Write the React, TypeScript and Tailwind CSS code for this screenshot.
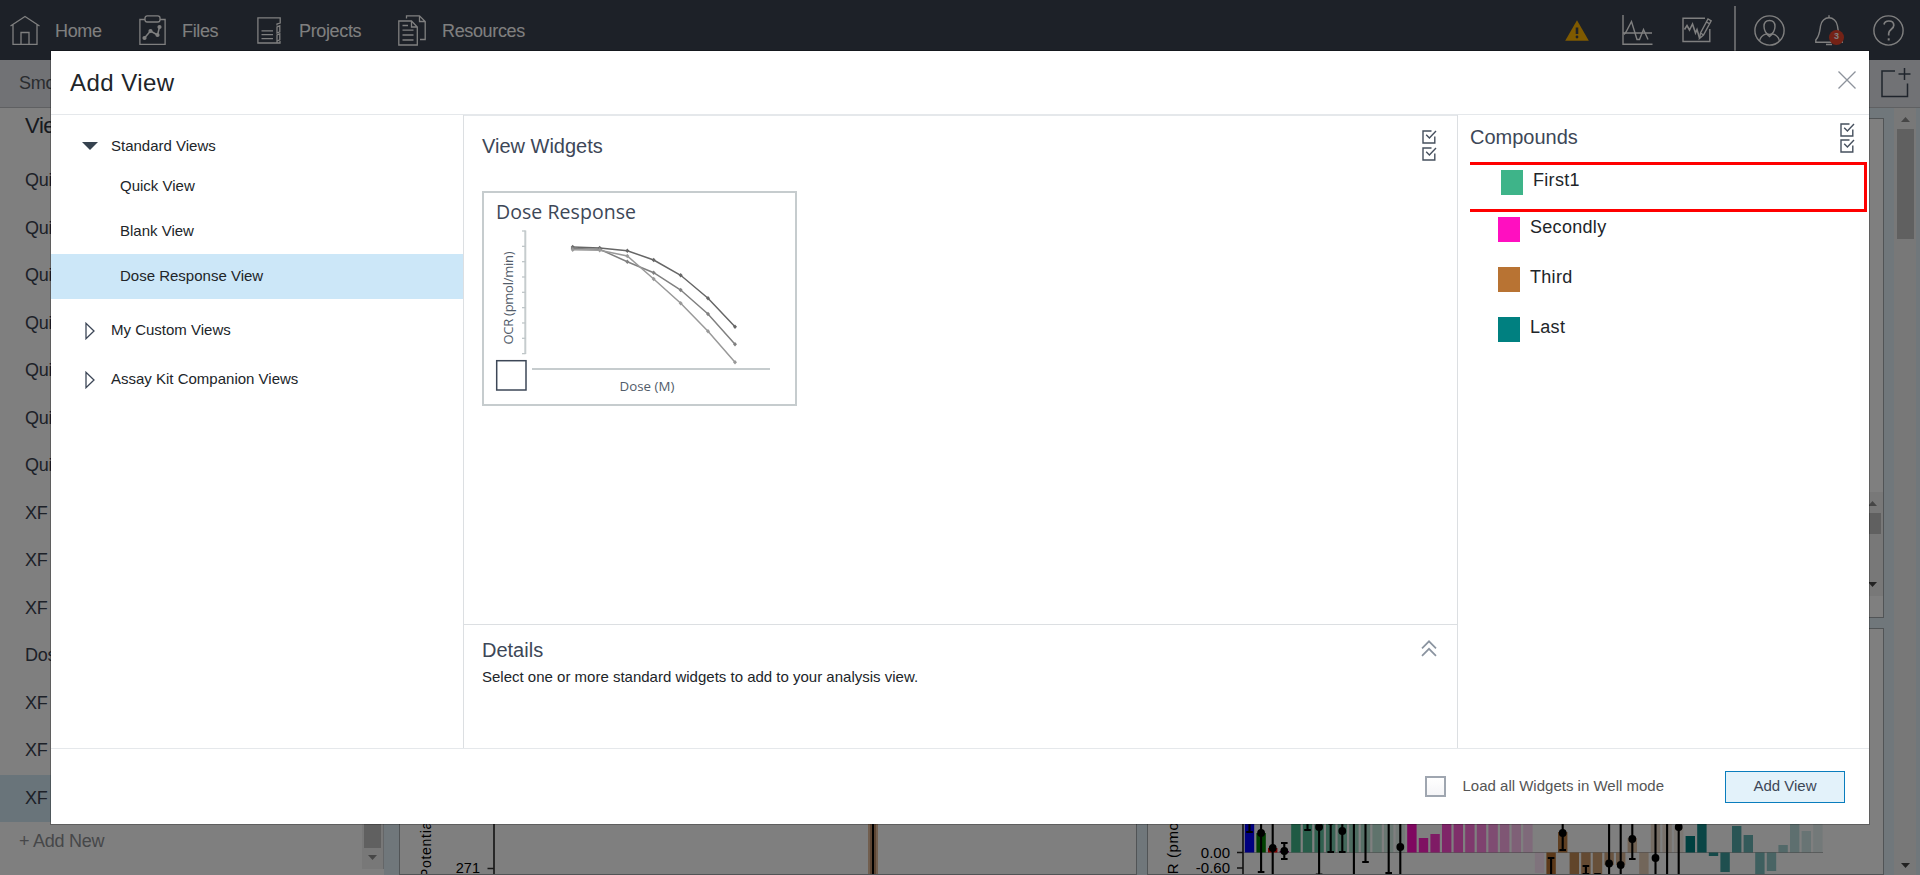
import React from "react";

const SANS = "font-['Liberation_Sans',Arial,sans-serif]";

/* ---------- icons ---------- */

const HomeIcon = () => (
  <svg width="30" height="30" viewBox="0 0 30 30" fill="none" stroke="currentColor" strokeWidth="1.3">
    <path d="M.5 11 15 1.5 29.5 11M3 9.5V29.3H27V9.5M11 29V17.5H19V29" />
  </svg>
);

const FilesIcon = () => (
  <svg width="27" height="30" viewBox="0 0 27 30" fill="none" stroke="currentColor" strokeWidth="1.3">
    <path d="M6 4.5H.9V29.3H26.1V4.5H21" />
    <rect x="6" y=".8" width="15" height="6.2" rx="2.2" />
    <path d="M5.500 23 11.500 16 18.500 20 20.500 12" strokeWidth="1.5" />
    <g fill="currentColor" stroke="none">
      <circle cx="5.500" cy="23" r="2.100" />
      <circle cx="11.500" cy="16" r="2.100" />
      <circle cx="18.500" cy="20" r="2.100" />
      <circle cx="20.500" cy="12" r="2.100" />
    </g>
  </svg>
);

const ProjectsIcon = () => (
  <svg width="24" height="27" viewBox="0 0 24 27" fill="none" stroke="currentColor" strokeWidth="1.3">
    <path d="M20 8.500V7L23.200 6V.9H.9V26H20V24.500M20 10v6l2.800-1.200V8.800zM20 18v6l2.800-1.200V16.800zM20 24.500v1.500h3v-2" />
    <path d="M4.500 13.800H16M4.500 17.700H16M4.500 21.600H16" />
  </svg>
);

const ResourcesIcon = () => (
  <svg width="28" height="31" viewBox="0 0 28 31" fill="none" stroke="currentColor" strokeWidth="1.3">
    <path d="M.8 6H13.500L19.300 12V30H.8zM13.500 6v6h5.800" />
    <path d="M8.500 3.500V.9H21.500L27.200 6.500V24.500H22M21.500 .9V6.500H27" />
    <path d="M4.500 10.500H10M4.500 15.200H15.500M4.500 20H15.500M4.500 25H15.500" />
  </svg>
);

const WarningIcon = () => (
  <svg width="24" height="21" viewBox="0 0 24 21">
    <path d="M12 .3 23.800 20.700H.2z" fill="#ffb400" />
    <path d="M12 7.500V14" stroke="#3a4250" strokeWidth="2.600" />
    <circle cx="12" cy="17" r="1.400" fill="#3a4250" />
  </svg>
);

const WaveIcon = () => (
  <svg width="31" height="31" viewBox="0 0 31 31" fill="none" stroke="currentColor" strokeWidth="1.400">
    <path d="M1 0V29.300H30.500M1 18H30" />
    <path d="M2 19.500 4 17 9.500 6.500 15 24.500H17.500L21.500 14.500 26 24.500" />
  </svg>
);

const EditChartIcon = () => (
  <svg width="30" height="26" viewBox="0 0 30 26" fill="none" stroke="currentColor" strokeWidth="1.400">
    <path d="M23 1.300H1V24.500H27.800V12" />
    <path d="M2.500 12.500 5 8.500 7.500 13 10.500 7 13.500 16 15 12.500 17.500 21" strokeWidth="1.600" />
    <path d="M17.500 21.500 18.500 16 26 2 29.200 3.800 21.500 18zM24.500 5 27.800 6.800M18.500 16 21.500 18" />
  </svg>
);

const UserIcon = () => (
  <svg width="31" height="31" viewBox="0 0 31 31" fill="none" stroke="currentColor" strokeWidth="1.400">
    <circle cx="15.500" cy="15.500" r="14.600" />
    <path d="M15.500 5.500c-3.500 0-5.500 2.500-5.500 6s2 8 5.500 8 5.500-4.500 5.500-8-2-6-5.500-6z" />
    <path d="M5.500 26C6.200 21.500 8.500 20 12.300 18.800L15.500 21.500 18.700 18.800C22.500 20 24.800 21.500 25.500 26" />
  </svg>
);

const BellIcon = () => (
  <svg width="28" height="31" viewBox="0 0 28 31" fill="none" stroke="currentColor" strokeWidth="1.400">
    <path d="M14 .3V3M11 29.500H17" />
    <path d="M.8 27.300H27.200V25C23.500 21 23.300 17 22.500 11 21.800 6 18 2.800 14 2.800S6.200 6 5.500 11C4.700 17 4.500 21 .8 25z" />
  </svg>
);

const HelpIcon = () => (
  <svg width="31" height="31" viewBox="0 0 31 31" fill="none" stroke="currentColor" strokeWidth="1.400">
    <circle cx="15.500" cy="15.500" r="14.600" />
    <path d="M11 9.500C11.500 7 13.200 6 15.800 6c3 0 5 1.600 5 4.300 0 4-5.100 4-5.100 8.300V20.500" strokeWidth="1.700" />
    <path d="M15.700 23.300v2.200" strokeWidth="2" />
  </svg>
);

const NewTabIcon = () => (
  <svg width="30" height="30" viewBox="0 0 30 30" fill="none" stroke="#3f4958" strokeWidth="1.500">
    <path d="M14 3H1V28.500H26.500V15.500" />
    <path d="M23.500 0V12M17.500 6H29.500" />
  </svg>
);

const CheckAll = ({ gap }: { gap: number }) => (
  <div className="flex flex-col" style={{ gap }}>
    {[0, 1].map((i) => (
      <svg key={i} width="15" height="14" viewBox="0 0 15 14" fill="none" stroke="#46505e">
        <path d="M9.500 1H1V13H12.800V6.500" strokeWidth="1.400" />
        <path d="M4.200 4.800 7.400 8 14 1" strokeWidth="1.400" />
      </svg>
    ))}
  </div>
);

const ArrowUp = ({ color }: { color: string }) => (
  <svg width="9" height="5" viewBox="0 0 9 5">
    <path d="M0 5 4.500 0 9 5z" fill={color} />
  </svg>
);

const ArrowDown = ({ color }: { color: string }) => (
  <svg width="9" height="5" viewBox="0 0 9 5">
    <path d="M0 0H9L4.500 5z" fill={color} />
  </svg>
);

/* ---------- page behind the dialog ---------- */

const viewRows = ["Quick View", "Quick View", "Quick View", "Quick View", "Quick View", "Quick View", "Quick View", "XF View", "XF View", "XF View", "Dose Response", "XF View", "XF View", "XF View"];

const ZERO = 34.5;
type Bar = { i: number; y: number; c: string; o: number };
const bar = (i: number, y: number, c: string, o: number): Bar => ({ i, y, c, o });
const GREEN = "#3eb489";
const PINK = "#ff0fc0";
const BROWN = "#b87333";
const TEAL = "#008080";
const group = (start: number, c: string, ys: number[], step: number) =>
  ys.map((y, k) => bar(start + k, y - 818, c, 1 - k * step));

const bars: Bar[] = [
  bar(0, 0, "#0000ff", 1),
  bar(1, 15, "#008000", 1),
  bar(2, 30, "#ff0000", 1),
  bar(3, 33, "#800080", 1),
  ...group(4, GREEN, [818, 818, 818, 818, 818, 818, 818, 818, 818, 818], 0.096),
  ...group(14, PINK, [818, 838, 834, 818, 818, 818, 818, 818, 818, 818, 818, 873], 0.082),
  ...group(26, BROWN, [880, 832, 880, 880, 880, 865, 865, 838, 880, 818, 818, 828], 0.08),
  ...group(38, TEAL, [836, 818, 856, 872, 826, 835, 874, 871, 845, 818, 831, 818], 0.082),
];

type Err = { i: number; a?: number; b?: number; d?: number };
const errs: Err[] = [
  { i: 0, b: 832 },
  { i: 1, b: 872, d: 833 },
  { i: 2, d: 848 },
  { i: 3, a: 843, b: 859, d: 851 },
  { i: 5, b: 830 },
  { i: 6, b: 874.5, d: 827 },
  { i: 7, b: 852, d: 821 },
  { i: 8, b: 852, d: 831 },
  { i: 9 },
  { i: 10, b: 862 },
  { i: 12, b: 873 },
  { i: 13, d: 847 },
  { i: 26, a: 858 },
  { i: 27, b: 850, d: 833 },
  { i: 29, a: 866, b: 874 },
  { i: 30, a: 874 },
  { i: 31, d: 863.5 },
  { i: 32, d: 865 },
  { i: 33, b: 859, d: 839 },
  { i: 35, d: 858 },
  { i: 36 },
  { i: 37, d: 827 },
];

const cx = (i: number) => 101.5 + 11.6 * i;

/* Lower strip of the OCR bar chart; its origin is the card's left edge. */
const BarChart = () => (
  <svg width="735" height="56" viewBox="0 0 735 56" className={SANS}>
    <path d={`M96 ${ZERO}H675`} stroke="#bbb" strokeWidth="1" />
    {bars.map((b) => (
      <rect key={b.i} x={cx(b.i) - 4.7} y={Math.min(b.y, ZERO)} width="9.400" height={Math.abs(ZERO - b.y)} fill={b.c} fillOpacity={b.o} />
    ))}
    <path d="M95 0V56M89 34.500H95M89 50H95" stroke="#222" strokeWidth="1.600" />
    {errs.map((e) => {
      const a = e.a === undefined ? 0 : e.a - 818;
      const b = e.b === undefined ? 58 : e.b - 818;
      return (
        <g key={e.i}>
          <path d={`M${cx(e.i)} ${a}V${b}M${cx(e.i) - 3.3} ${a}h6.600M${cx(e.i) - 3.3} ${b}h6.600`} stroke="#000" strokeWidth="2.100" />
          {e.d !== undefined && <circle cx={cx(e.i)} cy={e.d - 818} r="3.900" />}
        </g>
      );
    })}
    <text x="82" y="39.500" fontSize="15" textAnchor="end">0.00</text>
    <text x="82" y="55" fontSize="15" textAnchor="end">-0.60</text>
    <text transform="translate(30 80) rotate(-90)" fontSize="15" letterSpacing=".6">OCR (pmol/min)</text>
  </svg>
);

const PotentialChart = () => (
  <svg width="735" height="56" viewBox="0 0 735 56" className={SANS}>
    <rect x="468" y="0" width="10" height="56" fill="#d9a77c" fillOpacity=".75" />
    <rect x="470" y="0" width="6" height="56" fill="#b88a66" />
    <path d="M473 0V56" stroke="#000" strokeWidth="2" />
    <path d="M94 0V56M87.500 50.500H94" stroke="#333" strokeWidth="1.700" />
    <text x="80" y="55" fontSize="14.500" textAnchor="end">271</text>
    <text transform="translate(30.500 60) rotate(-90)" fontSize="14" letterSpacing=".7">Potential</text>
  </svg>
);

const NavItem = ({ icon, label, className }: { icon: React.ReactNode; label: string; className: string }) => (
  <div className={`flex items-center ${className}`}>
    {icon}
    <span className="pt-px text-[18px] leading-6 tracking-[-0.35px]">{label}</span>
  </div>
);

const Backdrop = () => (
  <div className="flex h-[875px] w-[1920px] flex-col overflow-hidden bg-white">
    <header className="flex h-[60px] shrink-0 items-center justify-between bg-[#3a4250] pl-[10px] pr-[16px] text-white">
      <nav className="flex items-center">
        <NavItem icon={<HomeIcon />} label="Home" className="w-[128.500px] gap-[15px]" />
        <NavItem icon={<FilesIcon />} label="Files" className="w-[118.500px] gap-[16.500px]" />
        <NavItem icon={<ProjectsIcon />} label="Projects" className="w-[141px] gap-[18px]" />
        <NavItem icon={<ResourcesIcon />} label="Resources" className="gap-[16px]" />
      </nav>
      <div className="flex items-center">
        <div className="mr-[33px]"><WarningIcon /></div>
        <div className="mr-[29px]"><WaveIcon /></div>
        <div className="mr-[22px]"><EditChartIcon /></div>
        <div className="mr-[18px] mt-[6px] h-[54px] w-[2px] bg-[#c4c7cc]" />
        <div className="mr-[30px]"><UserIcon /></div>
        <div className="relative mr-[30px]">
          <BellIcon />
          <span className="absolute left-[14px] top-[15px] flex size-[15px] items-center justify-center rounded-full bg-[#e8452c] text-[9px] font-bold">3</span>
        </div>
        <HelpIcon />
      </div>
    </header>
    <div className="flex h-12 shrink-0 items-center justify-between border-b border-[#bfc1c4] bg-[#e2e5ea] pl-[19px] pr-[9px] text-[18px] tracking-[-0.3px] text-[#55595f]">
      <span>Smo</span>
      <div className="mb-[2px]"><NewTabIcon /></div>
    </div>
    <div className="flex min-h-0 flex-1">
      <aside className="flex w-[384px] shrink-0 bg-white text-[#3a4250]">
        <div className="flex w-[362px] flex-col">
          <h2 className="h-[49px] pl-[25px] text-[22px] leading-[36px] tracking-[-0.4px] text-[#2f3540]">Views</h2>
          {viewRows.map((r, i) => (
            <div key={i} className={`h-[47.5px] shrink-0 pl-[25px] text-[18px] leading-[46px] tracking-[-0.3px] ${i === 13 ? "bg-[#d2e8f5]" : ""}`}>{r}</div>
          ))}
          <div className="pl-[19px] text-[18px] leading-[38px] tracking-[-0.25px] text-[#8d8f93]">+ Add New</div>
        </div>
        <div className="flex h-[761px] w-[22px] flex-col items-center justify-end border-r border-[#c8ccd0] bg-[#f1f1f1] pb-[9px]">
          <div className="mb-[7px] h-[600px] w-[17px] bg-[#c1c1c1]" />
          <ArrowDown color="#8c8c8c" />
        </div>
      </aside>
      <main className="flex flex-1 bg-[#e1eef7]">
        <div className="flex w-[1500px] flex-col gap-[10px] pl-[15px] pt-[10px]">
          <section className="flex h-[500px] shrink-0 items-end justify-end border border-[#a3a8ad] bg-white pb-[21px]">
            <div className="flex h-[104px] w-[22px] flex-col items-center bg-[#f1f1f1] pt-[9px]">
              <ArrowUp color="#8c8c8c" />
              <div className="mt-[7px] h-[21px] w-[17px] bg-[#c1c1c1]" />
              <div className="mt-[48px]"><ArrowDown color="#444" /></div>
            </div>
          </section>
          <div className="flex min-h-0 flex-1 justify-between">
            <section className="flex w-[738px] items-end border border-[#a3a8ad] bg-white"><PotentialChart /></section>
            <section className="flex w-[737px] items-end border border-[#a3a8ad] bg-white"><BarChart /></section>
          </div>
        </div>
        <div className="ml-[10px] flex w-[22px] flex-col items-center justify-between bg-[#f1f1f1] pb-[7px] pt-[9px]">
          <div className="flex flex-col items-center gap-[7px]">
            <ArrowUp color="#8c8c8c" />
            <div className="h-[110px] w-[17px] bg-[#c1c1c1]" />
          </div>
          <ArrowDown color="#444" />
        </div>
      </main>
    </div>
  </div>
);

/* ---------- dialog ---------- */

const curves = [
  { c: "#666", p: [[572.7, 247], [599.7, 248], [627.3, 250.7], [653.7, 260], [680.7, 275.3], [708, 298.3], [735, 326.7]] },
  { c: "#808080", p: [[572.7, 248.5], [599.7, 249.3], [627.3, 261.7], [653.7, 272.7], [680.7, 290], [708, 314], [735, 344.3]] },
  { c: "#999", p: [[572.7, 249.7], [599.7, 250.3], [627.3, 256], [653.7, 279], [680.7, 303.3], [708, 331.3], [735, 362.3]] },
];

const DoseWidget = () => (
  <svg width="315" height="215" viewBox="482 191 315 215" className="font-['Open_Sans','Noto_Sans',sans-serif]">
    <rect x="483" y="192" width="313" height="213" fill="#fff" stroke="#c6ccce" strokeWidth="2" />
    <text x="496" y="219" fontSize="19.500" fill="#3d4757" textLength="140">Dose Response</text>
    <text transform="translate(512.500 344.500) rotate(-90)" fontSize="13" fill="#525c6a" textLength="93">OCR (pmol/min)</text>
    <text x="619.500" y="391" fontSize="13.300" fill="#525c6a" textLength="55">Dose (M)</text>
    <path d="M525.300 230.500V354M532 369H770" stroke="#c6ccce" strokeWidth="2" />
    {Array.from({ length: 9 }, (_, k) => (
      <path key={k} d={`M522 ${231 + k * 15.33}h3.500`} stroke="#bfc6c8" strokeWidth="1.300" />
    ))}
    {curves.map((s) => (
      <g key={s.c}>
        <polyline points={s.p.map((q) => q.join(",")).join(" ")} fill="none" stroke={s.c} strokeWidth="1.500" />
        {s.p.map(([x, y]) => (
          <path key={x} d={`M${x} ${y - 2.3}l2 2.300-2 2.300-2-2.300z`} fill={s.c} />
        ))}
      </g>
    ))}
    <rect x="496.700" y="360.700" width="29.300" height="29.300" fill="#fff" stroke="#3d4757" strokeWidth="1.500" />
  </svg>
);

const compounds = [
  { name: "First1", swatch: "bg-[#3eb489]", row: "mt-[17px] h-[50px] border-y-[3px] border-r-[3px] border-[#f00] pl-[31px] pt-[5px]" },
  { name: "Secondly", swatch: "bg-[#ff0fc0]", row: "h-[50px] pl-[28px] pt-[5px]" },
  { name: "Third", swatch: "bg-[#b87333]", row: "h-[50px] pl-[28px] pt-[5px]" },
  { name: "Last", swatch: "bg-[#008080]", row: "h-[50px] pl-[28px] pt-[5px]" },
];

const CollapsedIcon = () => (
  <svg width="10" height="18" viewBox="0 0 10 18" fill="none" stroke="#3d4757" strokeWidth="1.300">
    <path d="M1 1.300V16.700L9 9z" />
  </svg>
);

const Dialog = () => (
  <div className="absolute left-[51px] top-[51px] flex h-[773px] w-[1818px] flex-col bg-white text-[15px] text-[#212529] shadow-[0_0_0_1px_rgba(0,0,0,0.25)]">
    <div className="flex h-[64px] shrink-0 items-center justify-between border-b border-[#e5e8eb] pl-[19px] pr-[13px]">
      <h1 className="pt-px text-[24px] tracking-[0.45px]">Add View</h1>
      <svg width="18" height="18" viewBox="0 0 18 18" fill="none" stroke="#8d939c" strokeWidth="1.300" className="mb-[5px]">
        <path d="M.5 .5 17.500 17.500M17.500 .5 .5 17.500" />
      </svg>
    </div>
    <div className="flex h-[634px] shrink-0 border-b border-[#e5e8eb]">
      <div className="w-[412px] pt-[13px]">
        <div className="flex h-[36px] items-center pl-[31px]">
          <svg width="16" height="8" viewBox="0 0 16 8"><path d="M0 0H16L8 8z" fill="#36424f" /></svg>
          <span className="pl-[13px]">Standard Views</span>
        </div>
        <div className="h-[45px] pl-[69px] leading-[43px]">Quick View</div>
        <div className="h-[45px] pl-[69px] leading-[43px]">Blank View</div>
        <div className="mb-[7px] h-[45px] bg-[#cce7f8] pl-[69px] leading-[43px]">Dose Response View</div>
        <div className="flex h-[49px] items-center pl-[34px]"><CollapsedIcon /><span className="pl-[16px]">My Custom Views</span></div>
        <div className="flex h-[49px] items-center pl-[34px]"><CollapsedIcon /><span className="pl-[16px]">Assay Kit Companion Views</span></div>
      </div>
      <div className="flex w-[995px] flex-col border-x border-[#dcdfe2]">
        <div className="flex h-[509px] flex-col border-t border-[#e5e8eb] pl-[18px] pr-[20px]">
          <div className="flex items-start justify-between pt-[14px]">
            <h2 className="pt-px text-[20px] leading-[30px] text-[#3d4757]">View Widgets</h2>
            <CheckAll gap={3} />
          </div>
          <div className="mt-[30px]"><DoseWidget /></div>
        </div>
        <div className="flex-1 border-t border-[#dcdfe2] pl-[18px] pr-[20px] pt-[10px]">
          <div className="flex items-center justify-between">
            <h2 className="text-[20px] leading-[30px] text-[#3d4757]">Details</h2>
            <svg width="16" height="17" viewBox="0 0 16 17" fill="none" stroke="#8b94a0" strokeWidth="1.700" className="mb-[4px]">
              <path d="M1 8.300 8 1.300 15 8.300M1 15.800 8 8.800 15 15.800" />
            </svg>
          </div>
          <p className="leading-[24px]">Select one or more standard widgets to add to your analysis view.</p>
        </div>
      </div>
      <div className="flex-1 pl-[12px] pr-[2px]">
        <div className="flex h-[30px] items-start justify-between pr-[12px] pt-[7px]">
          <h2 className="text-[20px] leading-[30px] text-[#3d4757]">Compounds</h2>
          <div className="pt-px"><CheckAll gap={2} /></div>
        </div>
        <div>
          {compounds.map((c) => (
            <div key={c.name} className={`flex items-start ${c.row}`}>
              <span className={`h-[25px] w-[22px] ${c.swatch}`} />
              <span className="pl-[10px] text-[18px] leading-[20px] tracking-[0.3px]">{c.name}</span>
            </div>
          ))}
        </div>
      </div>
    </div>
    <div className="flex flex-1 items-center justify-end pr-[24px]">
      <span className="size-[21px] border-2 border-[#9fa6b0] bg-gradient-to-b from-white to-[#f5f5f7]" />
      <span className="pl-[17px] pr-[61px] text-[#555]">Load all Widgets in Well mode</span>
      <button className="h-[32px] w-[120px] border border-[#0a7dbd] bg-[#e3f2fa] text-[#3d4757]">Add View</button>
    </div>
  </div>
);

export default function App() {
  return (
    <div className={`relative h-[875px] w-[1920px] overflow-hidden ${SANS}`}>
      <Backdrop />
      <div className="absolute inset-0 bg-black/50" />
      <Dialog />
    </div>
  );
}
